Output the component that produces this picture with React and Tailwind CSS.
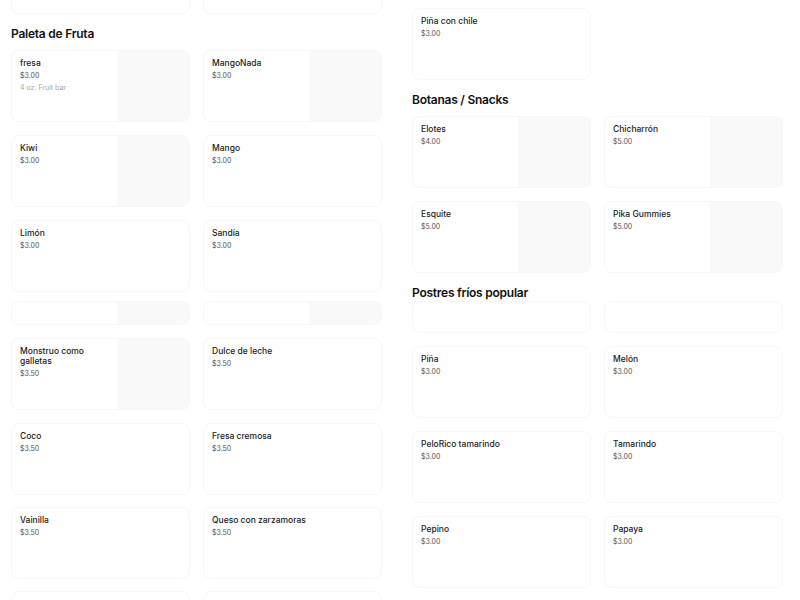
import React from 'react';

const leftRows = [
  { h: 73, mt: -59, items: [{}, {}] },
  { heading: 'Paleta de Fruta' },
  { items: [{ name: 'fresa', price: '$3.00', desc: '4 oz. Fruit bar', img: true }, { name: 'MangoNada', price: '$3.00', img: true }] },
  { mt: 13, items: [{ name: 'Kiwi', price: '$3.00', img: true }, { name: 'Mango', price: '$3.00' }] },
  { mt: 13, items: [{ name: 'Limón', price: '$3.00' }, { name: 'Sandía', price: '$3.00' }] },
  { mt: 9, h: 24, items: [{ img: true }, { img: true }] },
  { mt: 13, items: [{ name: 'Monstruo como galletas', price: '$3.50', img: true }, { name: 'Dulce de leche', price: '$3.50' }] },
  { mt: 13, items: [{ name: 'Coco', price: '$3.50' }, { name: 'Fresa cremosa', price: '$3.50' }] },
  { mt: 12, items: [{ name: 'Vainilla', price: '$3.50' }, { name: 'Queso con zarzamoras', price: '$3.50' }] },
  { mt: 12, items: [{}, {}] },
];

const rightRows = [
  { mt: 8, items: [{ name: 'Piña con chile', price: '$3.00' }, null] },
  { heading: 'Botanas / Snacks' },
  { items: [{ name: 'Elotes', price: '$4.00', img: true }, { name: 'Chicharrón', price: '$5.00', img: true }] },
  { mt: 13, items: [{ name: 'Esquite', price: '$5.00', img: true }, { name: 'Pika Gummies', price: '$5.00', img: true }] },
  { heading: 'Postres fríos popular', tight: true },
  { h: 32, items: [{}, {}] },
  { mt: 13, items: [{ name: 'Piña', price: '$3.00' }, { name: 'Melón', price: '$3.00' }] },
  { mt: 13, items: [{ name: 'PeloRico tamarindo', price: '$3.00' }, { name: 'Tamarindo', price: '$3.00' }] },
  { mt: 13, items: [{ name: 'Pepino', price: '$3.00' }, { name: 'Papaya', price: '$3.00' }] },
];

function Card({ item, h }) {
  if (!item) return <div />;
  return (
    <div
      className="flex bg-white rounded-[8px] border border-[#f7f7f7] overflow-hidden"
      style={{ height: h }}
    >
      <div className="flex-1 min-w-0 pt-[7px] pl-[8px] pr-[8px]">
        {item.name && (
          <p className="text-[8.5px] leading-[10px] font-medium text-[#222]">{item.name}</p>
        )}
        {item.price && (
          <p className="mt-[2px] text-[7px] leading-[12px] text-[#545454]">{item.price}</p>
        )}
        {item.desc && (
          <p className="text-[7px] leading-[12px] text-[#a6a6a6]">{item.desc}</p>
        )}
      </div>
      {item.img && <div className="w-[72px] shrink-0 bg-[#f9f9f9]" />}
    </div>
  );
}

function Column({ rows }) {
  return (
    <div className="w-[371px] shrink-0 flex flex-col">
      {rows.map((row, i) =>
        row.heading ? (
          <h2
            key={i}
            className={
              'pt-[12px] text-[12px] leading-[16px] font-semibold tracking-[-0.02em] text-[#111] ' +
              (row.tight ? 'pb-0' : 'pb-[8px]')
            }
          >
            {row.heading}
          </h2>
        ) : (
          <div key={i} className="grid grid-cols-2 gap-[13px]" style={{ marginTop: row.mt || 0 }}>
            {row.items.map((it, j) => (
              <Card key={j} item={it} h={row.h || 72} />
            ))}
          </div>
        )
      )}
    </div>
  );
}

export default function App() {
  return (
    <div className="h-[600px] overflow-hidden bg-white flex gap-[30px] pl-[11px] font-['Inter','Liberation_Sans',sans-serif]">
      <Column rows={leftRows} />
      <Column rows={rightRows} />
    </div>
  );
}
